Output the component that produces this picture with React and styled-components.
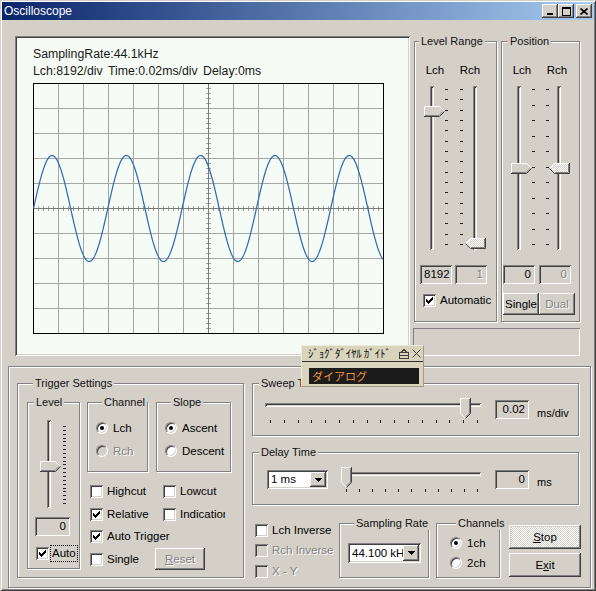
import React from 'react';
import styled, { createGlobalStyle, css } from 'styled-components';

const FACE = '#d4d0c8';
const SHADOW = '#808080';
const DARK = '#404040';
const UI_FONT = '"Liberation Sans", Arial, sans-serif';

const GlobalStyle = createGlobalStyle`
  html, body { margin: 0; padding: 0; background: ${FACE}; }
  body { font-family: ${UI_FONT}; font-size: 11px; line-height: 13px; color: #000; }
  *, *::before, *::after { box-sizing: border-box; }
`;

const sunkenEdge = css`
  box-shadow: inset 1px 1px 0 ${SHADOW}, inset -1px -1px 0 #fff, inset 2px 2px 0 ${DARK}, inset -2px -2px 0 ${FACE};
`;
const raisedEdge = css`
  box-shadow: inset -1px -1px 0 ${DARK}, inset 1px 1px 0 #fff, inset -2px -2px 0 ${SHADOW}, inset 2px 2px 0 ${FACE};
`;
const disabledText = css`
  color: ${SHADOW};
  text-shadow: 1px 1px 0 #fff;
`;

/* ---------- window chrome ---------- */
const Window = styled.div`
  position: relative;
  width: 596px;
  height: 591px;
  padding: 2px;
  background: ${FACE};
  box-shadow: inset 1px 1px 0 ${FACE}, inset -1px -1px 0 ${DARK}, inset 2px 2px 0 #fff, inset -2px -2px 0 ${SHADOW};
  display: flex;
  flex-direction: column;
  overflow: hidden;
`;
const TitleBar = styled.div`
  flex: none;
  height: 18px;
  display: flex;
  align-items: center;
  justify-content: space-between;
  padding: 0 2px 0 2px;
  background: linear-gradient(90deg, #0a246a, #a6caf0);
  color: #fff;
  font-size: 12px;
`;
const TitleText = styled.span`
  line-height: 18px;
`;
const CaptionButtons = styled.div`
  display: flex;
  align-items: center;
`;
const CaptionButton = styled.span`
  width: 16px;
  height: 14px;
  display: flex;
  align-items: center;
  justify-content: center;
  background: ${FACE};
  margin-left: ${p => (p.$gap ? 2 : 0)}px;
  ${raisedEdge}
`;
const Body = styled.div`
  flex: 1;
  display: flex;
  flex-direction: column;
`;

/* ---------- top area ---------- */
const TopSection = styled.div`
  display: flex;
  align-items: flex-start;
  padding: 15px 0 0 13px;
`;
const Display = styled.div`
  flex: none;
  width: 395px;
  height: 320px;
  margin-top: 1px;
  padding: 10px 0 0 18px;
  background: #f7fbf5;
  ${sunkenEdge}
  color: #1a1a1a;
  font-size: 12.3px;
  line-height: 17px;
`;
const ScopeLine = styled.div`
  white-space: nowrap;
  word-spacing: 2px;
`;
const PlotFrame = styled.div`
  margin-top: 3px;
  line-height: 0;
`;
const RightColumn = styled.div`
  display: flex;
  flex-direction: column;
  gap: 6px;
  margin-left: 4px;
`;
const GroupsRow = styled.div`
  display: flex;
  gap: 4px;
`;
const StatusBox = styled.div`
  width: 167px;
  height: 28px;
  margin-left: -1px;
  box-shadow: inset 1px 1px 0 ${SHADOW}, inset -1px -1px 0 #fff;
`;

/* ---------- group boxes ---------- */
const Group = styled.fieldset`
  flex: none;
  margin: 0 0 0 ${p => p.$ml || 0}px;
  min-width: 0;
  width: ${p => p.$w}px;
  height: ${p => p.$h}px;
  padding: ${p => p.$pad || '0'};
  border: 1px solid ${SHADOW};
  box-shadow: inset 1px 1px 0 #fff, 1px 1px 0 #fff;
`;
const Legend = styled.legend`
  margin-left: ${p => (p.$ml != null ? p.$ml : 6)}px;
  padding: 0 2px;
  font-size: 11px;
  line-height: 13px;
  background: ${FACE};
  white-space: nowrap;
  color: #111;
`;

/* ---------- labels / sliders ---------- */
const ChannelLabels = styled.div`
  display: flex;
  gap: 5px;
  padding-left: 5px;
`;
const ChLabel = styled.span`
  width: 30px;
  text-align: center;
  font-size: 11.5px;
`;
const SliderRow = styled.div`
  display: flex;
  align-items: flex-start;
  padding-left: ${p => p.$pl}px;
  margin-top: ${p => p.$mt || 0}px;
`;
const VTrack = styled.div`
  position: relative;
  flex: none;
  width: 4px;
  height: ${p => p.$h}px;
  margin-right: ${p => p.$mr || 0}px;
  background: ${FACE};
  box-shadow: inset 1px 1px 0 ${SHADOW}, inset -1px -1px 0 #fff, inset 2px 2px 0 ${DARK};
`;
const ThumbSlot = styled.div`
  position: absolute;
  left: ${p => p.$x}px;
  top: ${p => p.$y}px;
  line-height: 0;
`;
const TickColumn = styled.div`
  flex: none;
  display: flex;
  flex-direction: column;
  justify-content: space-between;
  height: ${p => p.$h}px;
  padding: ${p => p.$pt}px 0 ${p => p.$pb}px;
  margin-right: ${p => p.$mr || 0}px;
`;
const HTick = styled.span`
  display: block;
  width: 3px;
  height: 1px;
  background: #222;
`;
const HSlider = styled.div`
  position: relative;
  flex: none;
  width: ${p => p.$w}px;
  height: 26px;
  margin-left: ${p => p.$ml || 0}px;
`;
const HTrack = styled.div`
  width: ${p => p.$w}px;
  height: 4px;
  margin: 5px 0 0 2px;
  background: ${FACE};
  box-shadow: inset 1px 1px 0 ${SHADOW}, inset -1px -1px 0 #fff, inset 2px 2px 0 ${DARK};
`;
const TickRow = styled.div`
  display: flex;
  justify-content: space-between;
  margin-top: 13px;
  padding: 0 ${p => p.$pr}px 0 ${p => p.$pl}px;
`;
const VTick = styled.span`
  display: block;
  width: 1px;
  height: 3px;
  background: #222;
`;

/* ---------- edits, buttons, checks ---------- */
const EditRow = styled.div`
  display: flex;
  gap: ${p => p.$gap}px;
  padding-left: ${p => p.$pl}px;
  margin-top: ${p => p.$mt || 0}px;
`;
const Edit = styled.div`
  flex: none;
  width: ${p => p.$w}px;
  height: ${p => p.$h || 19}px;
  margin: ${p => p.$mt || 0}px 0 0 ${p => p.$ml || 0}px;
  padding: 0 4px;
  background: ${FACE};
  ${sunkenEdge}
  text-align: right;
  font-size: 11.5px;
  line-height: ${p => p.$h || 19}px;
  ${p => p.$disabled && disabledText}
`;
const UnitText = styled.span`
  margin: ${p => p.$mt}px 0 0 ${p => p.$ml}px;
  font-size: 11px;
`;
const ButtonRow = styled.div`
  display: flex;
  padding-left: ${p => p.$pl || 0}px;
  margin-top: ${p => p.$mt || 0}px;
`;
const Button = styled.div`
  flex: none;
  width: ${p => p.$w}px;
  height: ${p => p.$h}px;
  margin: ${p => p.$mt || 0}px 0 0 ${p => p.$ml || 0}px;
  display: flex;
  align-items: center;
  justify-content: center;
  font-size: 11.5px;
  background: ${FACE};
  ${p => p.$dither && css`
    background-image: conic-gradient(#fff 25%, ${FACE} 0 50%, #fff 0 75%, ${FACE} 0);
    background-size: 2px 2px;
  `}
  ${raisedEdge}
  ${p => p.$disabled && disabledText}
`;
const CheckRow = styled.div`
  display: flex;
  align-items: center;
  height: 13px;
  padding-left: ${p => p.$pl || 0}px;
  margin-top: ${p => p.$mt || 0}px;
  gap: ${p => (p.$gap != null ? p.$gap : 4)}px;
`;
const BoxFrame = styled.span`
  position: relative;
  flex: none;
  width: 13px;
  height: 13px;
  line-height: 0;
  background: ${p => (p.$disabled ? FACE : '#fff')};
  ${sunkenEdge}
`;
const CheckLabel = styled.span`
  white-space: nowrap;
  font-size: 11.5px;
  ${p => p.$clip && css`
    max-width: ${p.$clip}px;
    overflow: hidden;
  `}
  ${p => p.$disabled && disabledText}
`;
const FocusLabel = styled.span`
  margin-left: -1px;
  padding: 0 1px;
  font-size: 11.5px;
  line-height: 15px;
  outline: 1px dotted #000;
`;
const Radio = styled.span`
  position: relative;
  flex: none;
  width: 12px;
  height: 12px;
  border-radius: 50%;
  background: ${p => (p.$disabled ? FACE : '#fff')};
  border: 1px solid;
  border-color: ${SHADOW} #fff #fff ${SHADOW};
  box-shadow: inset 1px 1px 0 ${DARK}, inset -1px -1px 0 ${FACE};
  &::after {
    content: '';
    display: ${p => (p.$on ? 'block' : 'none')};
    position: absolute;
    left: 3px;
    top: 3px;
    width: 4px;
    height: 4px;
    border-radius: 50%;
    background: #000;
  }
`;
const RadioList = styled.div`
  display: flex;
  flex-direction: column;
  gap: ${p => p.$gap}px;
`;
const RadioRow = styled.div`
  display: flex;
  align-items: center;
  height: 13px;
  gap: 5px;
  font-size: 11.5px;
  ${p => p.$disabled && css`& > span:last-child { ${disabledText} }`}
`;
const Combo = styled.div`
  flex: none;
  display: flex;
  width: ${p => p.$w}px;
  height: ${p => p.$h}px;
  margin: ${p => p.$mt || 0}px 0 0 ${p => p.$ml || 0}px;
  padding: 2px;
  background: #fff;
  ${sunkenEdge}
`;
const ComboText = styled.span`
  flex: 1;
  overflow: hidden;
  white-space: nowrap;
  padding-left: 2px;
  font-size: 11.5px;
  line-height: ${p => p.$h}px;
`;
const ComboButton = styled.span`
  flex: none;
  width: 16px;
  display: flex;
  align-items: center;
  justify-content: center;
  background: ${FACE};
  ${raisedEdge}
`;

/* ---------- bottom area ---------- */
const BottomFrame = styled.div`
  width: 583px;
  height: 222px;
  margin: 10px 0 0 6px;
  padding: 10px 0 0 8px;
  display: flex;
  gap: 8px;
  border: 1px solid ${SHADOW};
  box-shadow: inset 1px 1px 0 #fff, 1px 1px 0 #fff;
`;
const TriggerBody = styled.div`
  display: flex;
  align-items: flex-start;
`;
const TriggerRight = styled.div`
  display: flex;
  flex-direction: column;
  margin-left: 7px;
`;
const RadioGroups = styled.div`
  display: flex;
  gap: 8px;
`;
const CheckGrid = styled.div`
  display: grid;
  grid-template-columns: 73px 70px;
  grid-auto-rows: 13px;
  row-gap: 9.5px;
  margin-top: 13px;
  padding-left: 3px;
`;
const ResetCell = styled.div`
  display: block;
`;
const ControlsColumn = styled.div`
  display: flex;
  flex-direction: column;
  gap: 10px;
`;
const SliderLine = styled.div`
  display: flex;
  align-items: flex-start;
  padding-left: ${p => p.$pl}px;
`;
const OptionsRow = styled.div`
  display: flex;
  align-items: flex-start;
  margin-top: 2px;
`;
const InverseColumn = styled.div`
  width: 87px;
  display: flex;
  flex-direction: column;
  gap: 7.5px;
  padding: 6.5px 0 0 3px;
`;
const ButtonColumn = styled.div`
  display: flex;
  flex-direction: column;
  gap: 4px;
  margin-left: 9px;
  padding-top: 8px;
`;

/* ---------- jog dial guide overlay ---------- */
const JogGuide = styled.div`
  position: absolute;
  left: 301px;
  top: 345px;
  width: 123px;
  height: 42px;
  background: #d9d5bc;
  border: 1px solid #ecead8;
  border-right-color: #a09c88;
  border-bottom-color: #a09c88;
  font-family: "Noto Sans CJK JP", sans-serif;
`;
const JogHeader = styled.div`
  height: 16px;
  display: flex;
  align-items: center;
  justify-content: space-between;
  padding: 0 2px 0 6px;
  border-bottom: 1px solid #303030;
  font-size: 11px;
  line-height: 15px;
  color: #111;
`;
const JogTitle = styled.span`
  white-space: nowrap;
  letter-spacing: -0.2px;
`;
const JogIcons = styled.div`
  display: flex;
  align-items: center;
  gap: 3px;
  line-height: 0;
`;
const JogBar = styled.div`
  height: 16px;
  margin: 6px 4px 0 7px;
  padding-left: 3px;
  background: #1c1c1c;
  color: #f0943a;
  font-size: 11px;
  line-height: 16px;
`;

/* ---------- drawings ---------- */
const DitherDefs = () => (
  <defs>
    <pattern id="dith" width="2" height="2" patternUnits="userSpaceOnUse">
      <rect width="2" height="2" fill={FACE} />
      <rect width="1" height="1" fill="#fff" />
      <rect x="1" y="1" width="1" height="1" fill="#fff" />
    </pattern>
  </defs>
);

function Thumb({ dir, dither }) {
  const fill = dither ? 'url(#dith)' : FACE;
  if (dir === 'right') {
    return (
      <svg width="21" height="11" viewBox="0 0 21 11">
        <DitherDefs />
        <polygon points="0,0 15,0 20.5,5.5 15,11 0,11" fill={fill} />
        <polyline points="0.5,10.5 0.5,0.5 15.5,0.5 20,5" fill="none" stroke="#fff" />
        <polyline points="20.5,5.5 15.5,10.5 0,10.5" fill="none" stroke={DARK} />
        <polyline points="1,9.5 15,9.5 19,5.5" fill="none" stroke={SHADOW} />
      </svg>
    );
  }
  if (dir === 'left') {
    return (
      <svg width="21" height="11" viewBox="0 0 21 11">
        <DitherDefs />
        <polygon points="0.5,5.5 6,0 21,0 21,11 6,11" fill={fill} />
        <polyline points="0.5,5.5 5.5,0.5 20.5,0.5" fill="none" stroke="#fff" />
        <polyline points="20.5,0 20.5,10.5 5.5,10.5 0.5,5.5" fill="none" stroke={DARK} />
        <polyline points="19.5,1 19.5,9.5 6,9.5" fill="none" stroke={SHADOW} />
      </svg>
    );
  }
  return (
    <svg width="11" height="21" viewBox="0 0 11 21">
      <DitherDefs />
      <polygon points="0,0 11,0 11,15 5.5,20.5 0,15" fill={fill} />
      <polyline points="0.5,15.5 0.5,0.5 10.5,0.5" fill="none" stroke="#fff" />
      <polyline points="0.5,15.5 5.5,20.5" fill="none" stroke="#fff" />
      <polyline points="10.5,0 10.5,15.5 5.5,20.5" fill="none" stroke={DARK} />
      <polyline points="9.5,1 9.5,15 5.5,19" fill="none" stroke={SHADOW} />
    </svg>
  );
}

function CheckMark({ color = '#000' }) {
  const tops = [2, 3, 4, 3, 2, 1, 0];
  return (
    <svg width="13" height="13" viewBox="0 0 13 13" shapeRendering="crispEdges">
      {tops.map((t, i) => (
        <rect key={i} x={3 + i} y={3 + t} width="1" height="3" fill={color} />
      ))}
    </svg>
  );
}

function CheckBox({ checked, disabled }) {
  return (
    <BoxFrame $disabled={disabled}>
      {checked && <CheckMark color={disabled ? SHADOW : '#000'} />}
    </BoxFrame>
  );
}

const DownArrow = () => (
  <svg width="7" height="4" viewBox="0 0 7 4" shapeRendering="crispEdges">
    <path d="M0 0h7v1h-1v1h-1v1h-1v1h-1v-1h-1v-1h-1v-1h-1z" fill="#000" />
  </svg>
);

const MinGlyph = () => (
  <svg width="8" height="8" viewBox="0 0 8 8" shapeRendering="crispEdges">
    <rect x="1" y="6" width="6" height="2" fill="#000" />
  </svg>
);
const MaxGlyph = () => (
  <svg width="9" height="9" viewBox="0 0 9 9" shapeRendering="crispEdges">
    <rect x="0.5" y="0.5" width="8" height="8" fill="none" stroke="#000" />
    <rect x="0" y="1" width="9" height="1" fill="#000" />
  </svg>
);
const CloseGlyph = () => (
  <svg width="8" height="7" viewBox="0 0 8 7">
    <path d="M0.5 0.5L7.5 6.5M7.5 0.5L0.5 6.5" stroke="#000" strokeWidth="1.6" />
  </svg>
);
const DockGlyph = () => (
  <svg width="10" height="10" viewBox="0 0 10 10" shapeRendering="crispEdges">
    <path d="M5 0.5L2 3.5M5 0.5L8 3.5" stroke="#404040" fill="none" />
    <rect x="0.5" y="3.5" width="9" height="6" fill="none" stroke="#404040" />
    <line x1="1" y1="6.5" x2="9" y2="6.5" stroke="#404040" />
  </svg>
);
const SmallX = () => (
  <svg width="9" height="9" viewBox="0 0 9 9">
    <path d="M0.5 0.5L8.5 8.5M8.5 0.5L0.5 8.5" stroke="#404040" strokeWidth="1" />
  </svg>
);

function ScopeGrid() {
  const grid = [];
  for (let k = 1; k < 14; k++) {
    if (k === 7) continue;
    grid.push(<line key={'v' + k} x1={25 * k + 0.5} y1={0} x2={25 * k + 0.5} y2={251} />);
  }
  for (let k = 1; k < 10; k++) {
    if (k === 5) continue;
    grid.push(<line key={'h' + k} x1={0} y1={25 * k + 0.5} x2={351} y2={25 * k + 0.5} />);
  }
  const ticks = [];
  for (let x = 5; x < 350; x += 5) {
    ticks.push(<line key={'tx' + x} x1={x + 0.5} y1={123} x2={x + 0.5} y2={128} />);
  }
  for (let y = 5; y < 250; y += 5) {
    ticks.push(<line key={'ty' + y} x1={173} y1={y + 0.5} x2={178} y2={y + 0.5} />);
  }
  let d = '';
  for (let i = 0; i <= 700; i++) {
    const x = i / 2;
    const y = 125.5 - 53 * Math.sin((2 * Math.PI * x) / 74.3);
    d += (i ? 'L' : 'M') + (x + 0.5).toFixed(2) + ' ' + y.toFixed(2);
  }
  return (
    <svg width="351" height="251" viewBox="0 0 351 251">
      <g stroke="#a6a6a6" strokeWidth="1" shapeRendering="crispEdges">{grid}</g>
      <g stroke="#a0a0a0" strokeWidth="1" shapeRendering="crispEdges">{ticks}</g>
      <g stroke="#7a7a7a" strokeWidth="1" shapeRendering="crispEdges">
        <line x1={175.5} y1={0} x2={175.5} y2={251} />
        <line x1={0} y1={125.5} x2={351} y2={125.5} />
      </g>
      <rect x="0.5" y="0.5" width="350" height="250" fill="none" stroke="#000" shapeRendering="crispEdges" />
      <path d={d} fill="none" stroke="#2f6db3" strokeWidth="1.25" />
    </svg>
  );
}

const ticks = n => Array.from({ length: n }, (_, i) => i);

export default function App() {
  return (
    <>
      <GlobalStyle />
      <Window>
        <TitleBar>
          <TitleText>Oscilloscope</TitleText>
          <CaptionButtons>
            <CaptionButton><MinGlyph /></CaptionButton>
            <CaptionButton><MaxGlyph /></CaptionButton>
            <CaptionButton $gap><CloseGlyph /></CaptionButton>
          </CaptionButtons>
        </TitleBar>
        <Body>
          <TopSection>
            <Display>
              <ScopeLine>SamplingRate:44.1kHz</ScopeLine>
              <ScopeLine>Lch:8192/div Time:0.02ms/div Delay:0ms</ScopeLine>
              <PlotFrame><ScopeGrid /></PlotFrame>
            </Display>
            <RightColumn>
              <GroupsRow>
                <Group $w={83} $h={287} $pad="16px 0 0 0">
                  <Legend $ml={4}>Level Range</Legend>
                  <ChannelLabels>
                    <ChLabel>Lch</ChLabel>
                    <ChLabel>Rch</ChLabel>
                  </ChannelLabels>
                  <SliderRow $pl={15} $mt={9}>
                    <VTrack $h={164} $mr={11}>
                      <ThumbSlot $x={-6} $y={20}><Thumb dir="right" /></ThumbSlot>
                    </VTrack>
                    <TickColumn $h={164} $pt={3} $pb={5} $mr={12}>
                      {ticks(16).map(i => <HTick key={i} />)}
                    </TickColumn>
                    <TickColumn $h={164} $pt={3} $pb={5} $mr={10}>
                      {ticks(16).map(i => <HTick key={i} />)}
                    </TickColumn>
                    <VTrack $h={164}>
                      <ThumbSlot $x={-8} $y={152}><Thumb dir="left" dither /></ThumbSlot>
                    </VTrack>
                  </SliderRow>
                  <EditRow $pl={5} $gap={3} $mt={15}>
                    <Edit $w={32}>8192</Edit>
                    <Edit $w={32} $disabled>1</Edit>
                  </EditRow>
                  <CheckRow $pl={8} $mt={10}>
                    <CheckBox checked />
                    <CheckLabel>Automatic</CheckLabel>
                  </CheckRow>
                </Group>
                <Group $w={79} $h={287} $pad="16px 0 0 0">
                  <Legend>Position</Legend>
                  <ChannelLabels>
                    <ChLabel>Lch</ChLabel>
                    <ChLabel>Rch</ChLabel>
                  </ChannelLabels>
                  <SliderRow $pl={15} $mt={9}>
                    <VTrack $h={164} $mr={11}>
                      <ThumbSlot $x={-6} $y={77}><Thumb dir="right" /></ThumbSlot>
                    </VTrack>
                    <TickColumn $h={164} $pt={3} $pb={5} $mr={11}>
                      {ticks(11).map(i => <HTick key={i} />)}
                    </TickColumn>
                    <TickColumn $h={164} $pt={3} $pb={5} $mr={8}>
                      {ticks(11).map(i => <HTick key={i} />)}
                    </TickColumn>
                    <VTrack $h={164}>
                      <ThumbSlot $x={-8} $y={77}><Thumb dir="left" dither /></ThumbSlot>
                    </VTrack>
                  </SliderRow>
                  <EditRow $pl={1} $gap={4} $mt={15}>
                    <Edit $w={32}>0</Edit>
                    <Edit $w={32} $disabled>0</Edit>
                  </EditRow>
                  <ButtonRow $pl={1} $mt={9}>
                    <Button $w={36} $h={22}>Single</Button>
                    <Button $w={36} $h={22} $disabled>Dual</Button>
                  </ButtonRow>
                </Group>
              </GroupsRow>
              <StatusBox />
            </RightColumn>
          </TopSection>

          <BottomFrame>
            <Group $w={227} $h={201} $pad="6px 0 0 9px">
              <Legend>Trigger Settings</Legend>
              <TriggerBody>
                <Group $w={53} $h={173} $pad="11px 0 0 0">
                  <Legend>Level</Legend>
                  <SliderRow $pl={19}>
                    <VTrack $h={88} $mr={12}>
                      <ThumbSlot $x={-7} $y={41}><Thumb dir="right" /></ThumbSlot>
                    </VTrack>
                    <TickColumn $h={88} $pt={6} $pb={4}>
                      {ticks(21).map(i => <HTick key={i} />)}
                    </TickColumn>
                  </SliderRow>
                  <Edit $w={35} $mt={9} $ml={7}>0</Edit>
                  <CheckRow $pl={8} $mt={11} $gap={3}>
                    <CheckBox checked />
                    <FocusLabel>Auto</FocusLabel>
                  </CheckRow>
                </Group>
                <TriggerRight>
                  <RadioGroups>
                    <Group $w={61} $h={76} $pad="12.5px 0 0 8px">
                      <Legend>Channel</Legend>
                      <RadioList $gap={10}>
                        <RadioRow><Radio $on /><span>Lch</span></RadioRow>
                        <RadioRow $disabled><Radio $disabled /><span>Rch</span></RadioRow>
                      </RadioList>
                    </Group>
                    <Group $w={75} $h={76} $pad="12.5px 0 0 8px">
                      <Legend>Slope</Legend>
                      <RadioList $gap={10}>
                        <RadioRow><Radio $on /><span>Ascent</span></RadioRow>
                        <RadioRow><Radio /><span>Descent</span></RadioRow>
                      </RadioList>
                    </Group>
                  </RadioGroups>
                  <CheckGrid>
                    <CheckRow><CheckBox /><CheckLabel>Highcut</CheckLabel></CheckRow>
                    <CheckRow><CheckBox /><CheckLabel>Lowcut</CheckLabel></CheckRow>
                    <CheckRow><CheckBox checked /><CheckLabel>Relative</CheckLabel></CheckRow>
                    <CheckRow><CheckBox /><CheckLabel $clip={45}>Indication</CheckLabel></CheckRow>
                    <CheckRow><CheckBox checked /><CheckLabel>Auto Trigger</CheckLabel></CheckRow>
                    <span />
                    <CheckRow><CheckBox /><CheckLabel>Single</CheckLabel></CheckRow>
                    <ResetCell>
                      <Button $w={50} $h={22} $ml={-8} $mt={-4.5} $disabled><u>R</u>eset</Button>
                    </ResetCell>
                  </CheckGrid>
                </TriggerRight>
              </TriggerBody>
            </Group>

            <ControlsColumn>
              <Group $w={327} $h={59} $pad="8px 0 0 0">
                <Legend>Sweep Time</Legend>
                <SliderLine $pl={10}>
                  <HSlider $w={220}>
                    <HTrack $w={216} />
                    <TickRow $pl={7} $pr={5}>
                      {ticks(16).map(i => <VTick key={i} />)}
                    </TickRow>
                    <ThumbSlot $x={197} $y={0}><Thumb dir="down" /></ThumbSlot>
                  </HSlider>
                  <Edit $w={34} $mt={2} $ml={12}>0.02</Edit>
                  <UnitText $mt={9} $ml={8}>ms/div</UnitText>
                </SliderLine>
              </Group>
              <Group $w={327} $h={59} $pad="8px 0 0 0">
                <Legend>Delay Time</Legend>
                <SliderLine $pl={14}>
                  <Combo $w={61} $h={19} $mt={3}>
                    <ComboText $h={15}>1 ms</ComboText>
                    <ComboButton><DownArrow /></ComboButton>
                  </Combo>
                  <HSlider $w={142} $ml={13}>
                    <HTrack $w={138} />
                    <TickRow $pl={5} $pr={5}>
                      {ticks(11).map(i => <VTick key={i} />)}
                    </TickRow>
                    <ThumbSlot $x={0} $y={0}><Thumb dir="down" /></ThumbSlot>
                  </HSlider>
                  <Edit $w={34} $mt={3} $ml={12}>0</Edit>
                  <UnitText $mt={9} $ml={8}>ms</UnitText>
                </SliderLine>
              </Group>
              <OptionsRow>
                <InverseColumn>
                  <CheckRow><CheckBox /><CheckLabel>Lch Inverse</CheckLabel></CheckRow>
                  <CheckRow><CheckBox disabled /><CheckLabel $disabled>Rch Inverse</CheckLabel></CheckRow>
                  <CheckRow><CheckBox disabled /><CheckLabel $disabled>X - Y</CheckLabel></CheckRow>
                </InverseColumn>
                <Group $w={90} $h={61} $pad="13px 0 0 8px">
                  <Legend>Sampling Rate</Legend>
                  <Combo $w={73} $h={20}>
                    <ComboText $h={16}>44.100 kHz</ComboText>
                    <ComboButton><DownArrow /></ComboButton>
                  </Combo>
                </Group>
                <Group $w={64} $h={61} $ml={7} $pad="6.5px 0 0 13px">
                  <Legend>Channels</Legend>
                  <RadioList $gap={7}>
                    <RadioRow><Radio $on /><span>1ch</span></RadioRow>
                    <RadioRow><Radio /><span>2ch</span></RadioRow>
                  </RadioList>
                </Group>
                <ButtonColumn>
                  <Button $w={72} $h={24} $dither><u>S</u>top</Button>
                  <Button $w={72} $h={24}>E<u>x</u>it</Button>
                </ButtonColumn>
              </OptionsRow>
            </ControlsColumn>
          </BottomFrame>
        </Body>

        <JogGuide>
          <JogHeader>
            <JogTitle>ｼﾞｮｸﾞﾀﾞｲﾔﾙ ｶﾞｲﾄﾞ</JogTitle>
            <JogIcons>
              <DockGlyph />
              <SmallX />
            </JogIcons>
          </JogHeader>
          <JogBar>ダイアログ</JogBar>
        </JogGuide>
      </Window>
    </>
  );
}
